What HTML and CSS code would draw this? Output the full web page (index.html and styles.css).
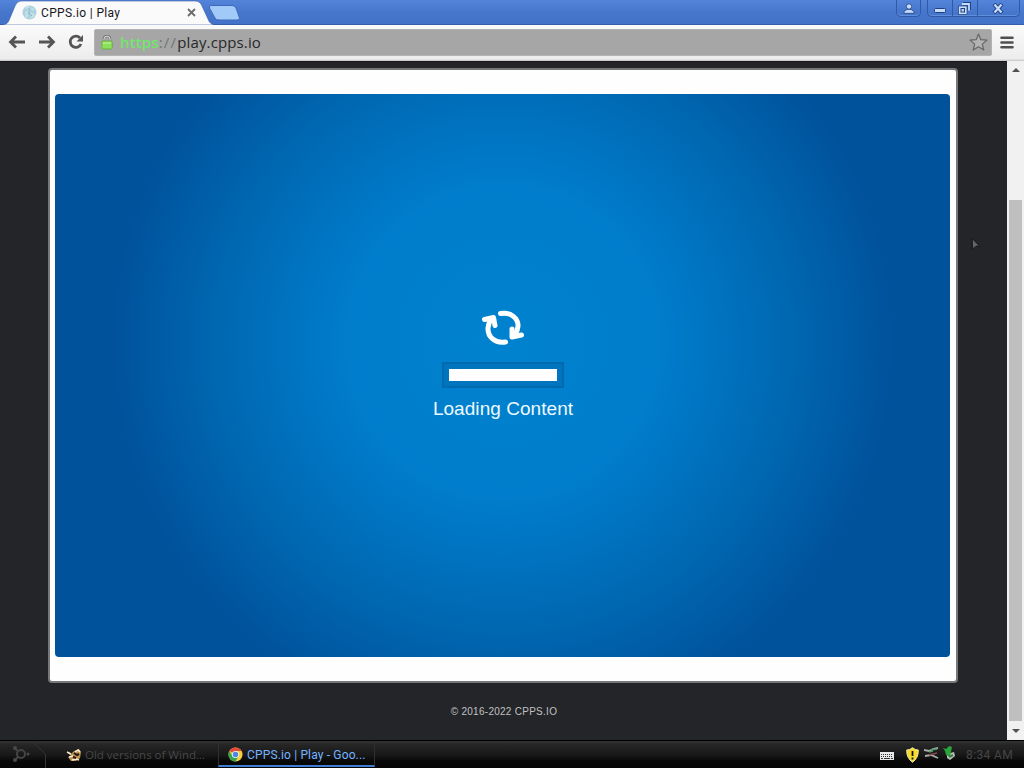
FILE: index.html
```html
<!DOCTYPE html>
<html lang="en">
<head>
    <meta charset="UTF-8">
    <title>CPPS.io | Play</title>
    <link rel="stylesheet" href="styles.css">
</head>
<body>
    <div class="screen">
        <div class="titlebar">
            <svg class="tab-shape" width="245" height="25" viewBox="0 0 245 25">
                <path d="M0 25 C7 25 8 23 10 18 L15 6 Q17 1 21 1 H195 Q200 1 202 6 L208 19 Q210 25 216 25 Z" fill="#fafafa" stroke="#3559a5" stroke-width=".6"/>
                <path d="M211 5.5 H232 Q235 5.5 236 8 L239.500 18 Q240 20 237 20 H219 Q216 20 215 18 L209.500 8 Q209 5.500 211 5.500Z" fill="#a1caf8" stroke="#4169bb"/>
            </svg>
            <div class="tab">
                <svg width="15" height="15" viewBox="0 0 15 15">
                    <circle cx="7.500" cy="7.500" r="7" fill="#acd2df"/>
                    <path d="M3 3 L6 2 L7 5 L4 8 L5 11 L3 12 M9 3 L12 5 M8 8 L12 10 L9 13" stroke="#c4e0e7" stroke-width="2" fill="none"/>
                    <path d="M7 3 V8 L10 11" stroke="#7fb3cb" fill="none"/>
                </svg>
                <span class="tab-title">CPPS.io | Play</span>
                <svg width="9" height="9" viewBox="0 0 9 9"><path d="M1 1 L8 8 M8 1 L1 8" stroke="#6c6c6c" stroke-width="1.800"/></svg>
            </div>
            <div class="window-buttons">
                <span class="wbtn user">
                    <svg width="12" height="11" viewBox="0 0 12 11"><circle cx="6" cy="3.500" r="2.700" fill="#c5dcfa" stroke="#203f7f" stroke-width=".8"/><path d="M1 10.300 V8.500 Q3 6.300 6 6.300 Q9 6.300 11 8.500 V10.300Z" fill="#c5dcfa" stroke="#203f7f" stroke-width=".8"/></svg>
                </span>
                <span class="wbtn min">
                    <svg width="12" height="14" viewBox="0 0 12 14"><rect x=".5" y="7.500" width="11" height="4" rx="1" fill="#c5dcfa" stroke="#203f7f"/></svg>
                </span>
                <span class="wbtn max">
                    <svg width="13" height="13" viewBox="0 0 13 13"><path d="M5 1.800 H11.200 V8" fill="none" stroke="#203f7f" stroke-width="3.500"/><path d="M4 2 H11 V8.500" fill="none" stroke="#c5dcfa" stroke-width="1.800"/><rect x=".5" y="4" width="8.500" height="8.500" fill="#c5dcfa" stroke="#203f7f" stroke-width=".7"/><rect x="3" y="6.500" width="3.500" height="3.500" fill="#bfd7f7" stroke="#203f7f"/></svg>
                </span>
                <span class="wbtn close">
                    <svg width="12" height="11" viewBox="0 0 12 11"><path d="M2 1 L10 10 M10 1 L2 10" stroke="#203f7f" stroke-width="4"/><path d="M2.500 1.500 L9.500 9.500 M9.500 1.500 L2.500 9.500" stroke="#c5dcfa" stroke-width="2.200"/></svg>
                </span>
            </div>
        </div>

        <div class="toolbar">
            <svg class="nav" width="85" height="18" viewBox="0 0 85 18">
                <g fill="none" stroke="#555" stroke-width="2.800">
                    <path d="M8 3.500 L2.500 9 L8 14.500 M3 9 H17"/>
                    <path d="M40 3.500 L45.500 9 L40 14.500 M31 9 H45"/>
                    <path d="M72 5 A5.600 5.600 0 1 0 73 11"/>
                </g>
                <path d="M75 2 V8.500 H68.500Z" fill="#555"/>
            </svg>
            <div class="address">
                <svg width="12" height="15" viewBox="0 0 12 15">
                    <path d="M3 7 V4 Q3 1 6 1 Q9 1 9 4 V7" fill="none" stroke="#777" stroke-width="2.400"/>
                    <path d="M3 7 V4 Q3 1.200 6 1.200 Q9 1.200 9 4 V7" fill="none" stroke="#ddd" stroke-width="1"/>
                    <rect x=".8" y="6" width="10.400" height="8" rx="1" fill="#8de05b" stroke="#60a83e" stroke-width=".8"/>
                    <path d="M2 8 H10" stroke="#c2f49f"/>
                </svg>
                <span class="url"><span class="secure">https</span><span class="slashes">://</span><span class="host">play.cpps.io</span></span>
                <svg class="star" width="19" height="18" viewBox="0 0 19 18"><path d="M9.500 1 L11.800 6.700 L18 7.100 L13.300 11.100 L14.800 17 L9.500 13.800 L4.200 17 L5.700 11.100 L1 7.100 L7.200 6.700Z" fill="#b3b3b3" stroke="#666" stroke-width="1.200" stroke-linejoin="round"/></svg>
            </div>
            <svg class="menu" width="14" height="13" viewBox="0 0 14 13"><path d="M1.500 1.700 H12.500 M1.500 6.500 H12.500 M1.500 11.300 H12.500" stroke="#505050" stroke-width="2.600" stroke-linecap="round"/></svg>
        </div>

        <div class="viewport">
            <div class="page">
                <div class="card">
                    <div class="game">
                        <svg class="refresh" width="44" height="36" viewBox="-1 0 44 36">
                            <g fill="none" stroke="#fff" stroke-width="5" stroke-linecap="round" stroke-linejoin="round">
                                <path d="M18.500 3.500 C29 1.500 36.500 9 36 16 Q35.800 20 33 25"/>
                                <path d="M30 19 L30 27 L39.500 25"/>
                                <path d="M23.500 32 C13 34 5.500 26.500 6 18 Q6.200 14 9 9"/>
                                <path d="M2.500 9.500 L11.500 7.500 L13 15.500"/>
                            </g>
                        </svg>
                        <div class="progress"><div class="progress-fill"></div></div>
                        <div class="loading-text">Loading Content</div>
                    </div>
                </div>
                <div class="copyright">© 2016-2022 CPPS.IO</div>
            </div>
            <div class="scrollbar">
                <span class="arrow up"></span>
                <span class="thumb"></span>
                <span class="arrow down"></span>
            </div>
            <svg class="cursor" width="12" height="17" viewBox="0 0 12 17"><path d="M2 2 L10 10 L6 10.500 L2.500 14Z" fill="#4a4b4d" stroke="#151619" stroke-width="1"/><path d="M3 5 V11 L7 9Z" fill="#66676a"/></svg>
        </div>

        <div class="taskbar">
            <svg class="start" width="48" height="28" viewBox="0 0 48 28">
                <path d="M33 1 L45.500 13 V28" fill="none" stroke="#353535"/>
                <g fill="none" stroke="#454545" stroke-width="2">
                    <circle cx="21" cy="13" r="4"/>
                    <path d="M14 7 L18 10 M15 19 L18 16"/>
                </g>
                <g fill="#484848"><circle cx="15" cy="7" r="2"/><circle cx="15" cy="19" r="2"/><circle cx="28" cy="13" r="1.500"/></g>
            </svg>
            <div class="task old">
                <svg width="16" height="14" viewBox="0 0 16 14">
                    <path d="M1 4 L5 6 L8 3 L13 1 L15 4 L14 10 L10 13 L5 13 L2 9 L5 8Z" fill="#bd9254"/>
                    <path d="M1 4 L5 6 M9 4 L12 2 L14 4 M3 9 L7 8 M6 12 L10 11 L13 12" stroke="#f6ead0" stroke-width="1.500" fill="none"/>
                    <path d="M8 5 L11 7 L13 6 M7 9 L10 10" stroke="#24180e" stroke-width="2" fill="none"/>
                </svg>
                <span class="task-text">Old versions of Wind...</span>
            </div>
            <div class="task current">
                <svg width="15" height="15" viewBox="0 0 16 16">
                    <circle cx="8" cy="8" r="7.500" fill="#f8ce3d"/>
                    <path d="M8 8 L1.500 4.250 A7.500 7.500 0 0 1 14.500 4.250 L8 4.250Z" fill="#e24a3c"/>
                    <path d="M8 8 L4.700 9.900 L1.500 4.250 A7.500 7.500 0 0 0 8 15.500 L11 10Z" fill="#36a353"/>
                    <circle cx="8" cy="8" r="3.800" fill="#f4f4ee"/>
                    <circle cx="8" cy="8" r="2.900" fill="#4b87e5"/>
                </svg>
                <span class="task-text">CPPS.io | Play - Goo...</span>
            </div>
            <div class="tray">
                <svg class="keyboard" width="14" height="8" viewBox="0 0 14 8"><rect width="14" height="8" fill="#e8e8e8"/><path d="M1 2.500 H13 M1 4.500 H13" stroke="#333" stroke-width="1" stroke-dasharray="1 1"/><path d="M1 6.500 H3 M4 6.500 H10 M11 6.500 H13" stroke="#333"/></svg>
                <svg width="13" height="16" viewBox="0 0 13 16"><path d="M6.500 .7 Q9 3 12.300 3 Q12.600 11 6.500 15.300 Q.4 11 .7 3 Q4 3 6.500 .7Z" fill="#f6da2c" stroke="#e9e6a6"/><path d="M6.500 4 V9 M6.500 10.500 V12.500" stroke="#111" stroke-width="1.800"/></svg>
                <svg class="plug" width="15" height="13" viewBox="0 0 15 13"><path d="M0 3 L5 4 L9 2 L14 1 M1 9 L7 8 L14 11" stroke="#aaa" stroke-width="1.800" fill="none"/><path d="M7 3 L13 2 M5 5 L9 4" stroke="#4e9b62" stroke-width="1.500"/><path d="M5 8 L13 6" stroke="#884d4a" stroke-width="1.500"/></svg>
                <svg class="usb" width="14" height="15" viewBox="0 0 14 15"><path d="M5 8 L12 6 L13 10 L8 14 L5 12Z" fill="#b8c5b8"/><path d="M1 2 L4 3 L7 0 L10 1 L9 6 L8 11 L4 9 L3 5Z" fill="#28a43b"/><path d="M7 11 L11 9" stroke="#46764a" stroke-width="2"/></svg>
                <span class="clock">8:34 AM</span>
            </div>
        </div>
    </div>
</body>
</html>
```

FILE: styles.css
```css
body {
    margin: 0;
    font-family: "Open Sans", Roboto, sans-serif;
    overflow: hidden;
}

* {
    box-sizing: border-box;
}

svg {
    display: block;
    flex-shrink: 0;
}

.screen {
    width: 1024px;
    height: 768px;
    display: flex;
    flex-direction: column;
}

/* browser window */
.titlebar {
    position: relative;
    height: 25px;
    display: flex;
    justify-content: space-between;
    background: linear-gradient(#5484da, #4576cb 50%, #4373c8 94%, #315496);
}

.tab-shape {
    position: absolute;
    left: 0;
    top: 0;
}

.tab {
    position: relative;
    width: 198px;
    height: 25px;
    padding-left: 22px;
    display: flex;
    align-items: center;
}

.tab-title {
    width: 146px;
    margin-left: 4px;
    margin-right: 0;
    font-family: Roboto, sans-serif;
    font-size: 12px;
    letter-spacing: 0.35px;
    color: #17171b;
    white-space: nowrap;
}

.window-buttons {
    display: flex;
    height: 17px;
    margin-right: 4px;
}

.wbtn {
    display: flex;
    justify-content: center;
    align-items: center;
    border: 1px solid #3159a6;
    border-top: 0;
    box-shadow: inset 0 -1px #5f8eda;
}

.user {
    width: 25px;
    margin-right: 6px;
    border-radius: 0 0 5px 5px;
}

.min {
    width: 25px;
    border-radius: 0 0 0 5px;
    border-right: 0;
}

.max {
    width: 26px;
    padding-right: 2px;
}

.close {
    width: 42px;
    padding-right: 1px;
    border-left: 0;
    border-radius: 0 0 5px 0;
}

.toolbar {
    height: 36px;
    display: flex;
    align-items: center;
    background: linear-gradient(#fafafa, #ededed 94%, #c4c4c4);
    padding: 0 9px 2px 8px;
}

.nav {
    margin-right: 1px;
}

.address {
    width: 898px;
    height: 27px;
    display: flex;
    align-items: center;
    padding: 0 3px 0 6px;
    background: #a6a6a6;
    border: 1px solid #b4b4b4;
    border-radius: 2px;
}

.url {
    margin-left: 7px;
    font-size: 15px;
    letter-spacing: 0.13px;
    white-space: nowrap;
}

.secure {
    color: #71e66b;
    font-weight: 600;
}

.slashes {
    color: #6e776e;
    letter-spacing: 1.2px;
}

.host {
    color: #28282a;
}

.star {
    margin-left: auto;
}

.menu {
    margin-left: 8px;
}

/* page content */
.viewport {
    position: relative;
    height: 679px;
    display: flex;
    background: #242528;
}

.page {
    width: 1007px;
    padding: 6px 0 0 48px;
    border-top: 1px solid #17181a;
}

.card {
    width: 910px;
    height: 615px;
    padding: 24px 6px 0 5px;
    background: #fefefe;
    border: 2px solid #77787a;
    border-radius: 4px;
}

.game {
    width: 895px;
    height: 563px;
    display: flex;
    flex-direction: column;
    align-items: center;
    padding: 216px 0 0 1px;
    border-radius: 4px;
    background: radial-gradient(circle 390px at 448px 248px, #0082ce 0, #007dcc 40%, #0070bc 60%, #0066b0 75%, #00529b 100%);
}

.progress {
    width: 122px;
    height: 26px;
    margin-top: 16px;
    padding: 5px;
    border: 2px solid #006ab0;
    background: #0075be;
}

.progress-fill {
    width: 108px;
    height: 12px;
    background: #fff;
}

.loading-text {
    margin-top: 9px;
    font: 19px/23px "Liberation Sans", Arial, sans-serif;
    letter-spacing: 0.05px;
    color: #eef9ff;
    white-space: nowrap;
}

.copyright {
    width: 912px;
    margin-top: 23px;
    text-align: center;
    font: 10px/12px "Liberation Sans", Arial, sans-serif;
    letter-spacing: 0.27px;
    color: #c0c1c3;
}

.scrollbar {
    width: 17px;
    height: 679px;
    display: flex;
    flex-direction: column;
    align-items: center;
    background: #f1f1f1;
}

.arrow {
    border-left: 4px solid transparent;
    border-right: 4px solid transparent;
}

.up {
    margin-top: 7px;
    border-bottom: 4px solid #505050;
}

.thumb {
    width: 13px;
    height: 521px;
    margin-top: 128px;
    background: #bfbfbf;
}

.down {
    margin-top: 8px;
    border-top: 4px solid #505050;
}

.cursor {
    position: absolute;
    left: 970px;
    top: 175px;
}

/* desktop taskbar */
.taskbar {
    height: 28px;
    display: flex;
    border-top: 1px solid #000;
    background: linear-gradient(#333 0, #252525 15%, #191919 50%, #080808 75%, #050505 100%);
}

.task {
    height: 27px;
    display: flex;
    align-items: center;
    font-size: 12px;
    white-space: nowrap;
}

.old {
    width: 170px;
    padding-left: 18px;
    color: #484848;
}

.old .task-text {
    margin-left: 3px;
    font-size: 11.5px;
}

.current {
    width: 157px;
    height: 26px;
    padding-left: 9px;
    padding-top: 3px;
    border-left: 1px solid #303030;
    border-right: 1px solid #303030;
    border-bottom: 2px solid #407dd2;
    color: #73b3ff;
}

.current .task-text {
    margin-left: 4px;
    font-family: Roboto, sans-serif;
    letter-spacing: 0.15px;
}

.tray {
    margin-left: auto;
    padding-right: 10px;
    display: flex;
    align-items: center;
}

.tray svg {
    margin-right: 5px;
}

.tray .keyboard {
    margin-right: 12px;
    margin-top: 3px;
}

.tray .plug {
    margin-right: 3px;
    margin-bottom: 3px;
}

.tray .usb {
    margin-bottom: 3px;
}

.clock {
    width: 48px;
    margin-left: 5px;
    font-family: Roboto, sans-serif;
    font-size: 12px;
    letter-spacing: 0.4px;
    color: #464646;
    white-space: nowrap;
}
```
